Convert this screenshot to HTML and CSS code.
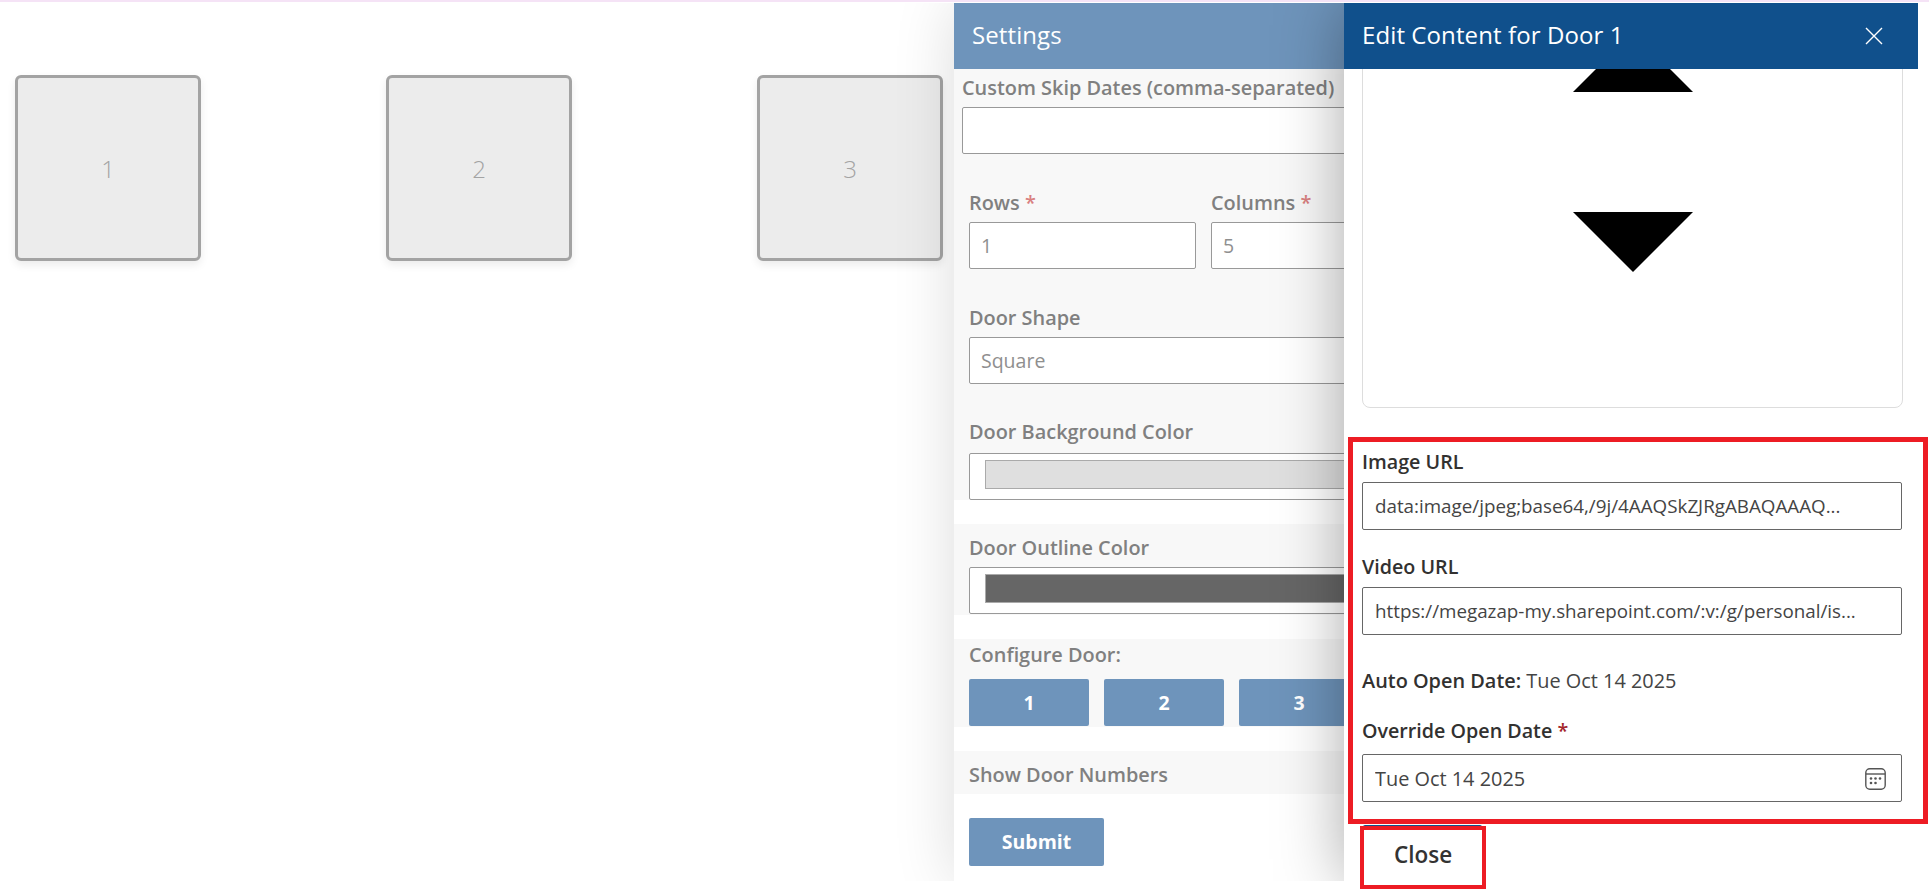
FILE: index.html
```html
<!DOCTYPE html>
<html lang="en">
  <head>
    <meta charset="UTF-8" />
    <meta name="viewport" content="width=device-width, initial-scale=1.0" />
    <title>Advent Calendar Settings</title>
    <link rel="stylesheet" href="styles.css">
  </head>
  <body>
    <div class="topline"></div>

    <main class="doors">
      <div class="door">1</div>
      <div class="door">2</div>
      <div class="door">3</div>
    </main>

    <div class="panels">
      <!-- settings panel, sits behind the door editor -->
      <aside class="settings">
        <div class="settings-title">Settings</div>
        <div class="block block-first">
          <label class="s-label s-label-skip">Custom Skip Dates (comma-separated)</label>
          <input class="s-input s-input-skip" type="text" />
          <div class="row-pair">
            <div class="pair-item">
              <label class="s-label">Rows <span class="req">*</span></label>
              <input class="s-input" type="text" value="1" />
            </div>
            <div class="pair-item">
              <label class="s-label">Columns <span class="req">*</span></label>
              <input class="s-input" type="text" value="5" />
            </div>
          </div>
          <label class="s-label">Door Shape</label>
          <input class="s-input s-input-shape" type="text" value="Square" />
          <label class="s-label s-label-color">Door Background Color</label>
          <div class="color-box"><div class="swatch swatch-bg"></div></div>
        </div>
        <div class="block block-outline">
          <label class="s-label">Door Outline Color</label>
          <div class="color-box"><div class="swatch swatch-outline"></div></div>
        </div>
        <div class="block block-configure">
          <label class="s-label">Configure Door:</label>
          <div class="door-buttons">
            <button class="door-btn">1</button>
            <button class="door-btn">2</button>
            <button class="door-btn">3</button>
          </div>
        </div>
        <div class="block block-numbers">
          <label class="s-label">Show Door Numbers</label>
        </div>
        <button class="submit-btn">Submit</button>
      </aside>

      <!-- door editor -->
      <aside class="editor">
        <div class="editor-title">
          <span>Edit Content for Door 1</span>
          <svg class="close-icon" viewBox="0 0 18 18" width="18" height="18">
            <path d="M1 1 L17 17 M17 1 L1 17" stroke="#fff" stroke-width="1.4" fill="none" />
          </svg>
        </div>
        <div class="editor-body">
          <div class="preview">
            <div class="arrow-up"></div>
            <div class="arrow-down"></div>
          </div>
          <label class="e-label e-label-image">Image URL</label>
          <input class="e-input e-input-url" type="text" value="data:image/jpeg;base64,/9j/4AAQSkZJRgABAQAAAQ..." />
          <label class="e-label e-label-video">Video URL</label>
          <input class="e-input e-input-url" type="text" value="https://megazap-my.sharepoint.com/:v:/g/personal/is..." />
          <p class="auto-date"><strong>Auto Open Date:</strong> Tue Oct 14 2025</p>
          <label class="e-label e-label-override">Override Open Date <span class="req-strong">*</span></label>
          <div class="date-field">
            <input class="e-input" type="text" value="Tue Oct 14 2025" />
            <svg class="calendar-icon" viewBox="0 0 21 22" width="21" height="22">
              <rect x="0.8" y="0.8" width="19.4" height="20.4" rx="4" fill="none" stroke="#555" stroke-width="1.4" />
              <path d="M1 6 H20" stroke="#555" stroke-width="1.4" />
              <g fill="#555">
                <circle cx="6" cy="10.5" r="1.3" />
                <circle cx="10.5" cy="10.5" r="1.3" />
                <circle cx="15" cy="10.5" r="1.3" />
                <circle cx="6" cy="15" r="1.3" />
                <circle cx="10.5" cy="15" r="1.3" />
              </g>
            </svg>
          </div>
          <button class="save-btn" aria-label="Close"></button>
        </div>
      </aside>
    </div>

    <!-- red review marks drawn over the screenshot -->
    <div class="mark mark-fields"></div>
    <div class="mark mark-close">Close</div>
  </body>
</html>
```

FILE: styles.css
```css
* {
  margin: 0;
  padding: 0;
  box-sizing: border-box;
}

html,
body {
  height: 891px;
  overflow: hidden;
}

body {
  background-color: #fff;
  font-family: "Open Sans", "Noto Sans", sans-serif;
  position: relative;
}

.topline {
  height: 2px;
  background-color: #f5e3f6;
}

/* doors */
.doors {
  display: flex;
  gap: 185px;
  padding: 73px 0 0 15px;
}

.door {
  width: 186px;
  height: 186px;
  display: flex;
  align-items: center;
  justify-content: center;
  background-color: #ececec;
  border: 3px solid #a3a3a3;
  border-radius: 6px;
  box-shadow: 0 4px 8px rgba(0, 0, 0, 0.08);
  color: #a3a3a3;
  font-size: 24px;
  font-weight: 300;
}

/* panels */
.panels {
  position: absolute;
  top: 3px;
  left: 0;
  width: 1918px;
  height: 878px;
  overflow: hidden;
}

.settings,
.editor {
  position: absolute;
  top: 0;
  bottom: 0;
}

.settings {
  left: 954px;
  right: 0;
  background-color: #fff;
  box-shadow: 0 0 58px rgba(0, 0, 0, 0.14);
  overflow: hidden;
}

.settings-title {
  height: 66px;
  display: flex;
  align-items: center;
  padding: 0 0 4px 18px;
  background-color: #6e94bb;
  color: #fff;
  font-size: 24px;
  letter-spacing: 0.1px;
}

.block {
  background-color: #f8f8f8;
  padding-left: 15px;
}

.block-first {
  padding-top: 7px;
  height: 431px;
}

.block-outline {
  margin-top: 24px;
  padding-top: 12px;
  height: 91px;
}

.block-configure {
  margin-top: 24px;
  padding-top: 4px;
  height: 88px;
}

.block-numbers {
  margin-top: 24px;
  padding-top: 12px;
  height: 43px;
}

.s-label {
  display: block;
  height: 24px;
  line-height: 23px;
  color: #808080;
  font-size: 19.9px;
  font-weight: 600;
  white-space: nowrap;
}

.s-label-skip {
  margin-left: -7px;
}

.s-label-color {
  margin-top: 36px;
}

.req {
  color: #d98080;
}

.s-input {
  display: block;
  width: 900px;
  height: 47px;
  margin-top: 7px;
  padding: 0 11px;
  border: 1px solid #999;
  border-radius: 2px;
  background-color: #fff;
  color: #8f8f8f;
  font-family: inherit;
  font-size: 19.5px;
}

.s-input-skip {
  margin-left: -7px;
}

.row-pair {
  display: flex;
  gap: 15px;
  margin-top: 37px;
  margin-bottom: 37px;
}

.pair-item {
  width: 227px;
}

.pair-item .s-input {
  width: 227px;
}

.pair-item:last-child,
.pair-item:last-child .s-input {
  width: 300px;
}

.color-box {
  width: 900px;
  height: 47px;
  margin-top: 9px;
  padding: 6px 15px;
  border: 1px solid #999;
  border-radius: 2px;
  background-color: #fff;
}

.block-outline .color-box {
  margin-top: 7px;
}

.swatch {
  height: 29px;
  border: 1px solid #aaa;
}

.swatch-bg {
  background-color: #dfdfdf;
}

.swatch-outline {
  background-color: #666;
}

.door-buttons {
  display: flex;
  gap: 15px;
  margin-top: 12px;
}

.door-btn,
.submit-btn {
  border: none;
  border-radius: 2px;
  background-color: #6e94bb;
  color: #fff;
  font-family: inherit;
  font-size: 19.5px;
  font-weight: 700;
}

.door-btn {
  width: 120px;
  height: 47px;
  flex-shrink: 0;
}

.submit-btn {
  display: block;
  width: 135px;
  height: 48px;
  margin: 24px 0 0 15px;
  padding-bottom: 2px;
}

/* editor */
.editor {
  left: 1344px;
  right: 0;
  display: flex;
  flex-direction: column;
  background-color: #fff;
  box-shadow: 0 0 62px rgba(0, 0, 0, 0.34);
}

.editor-title {
  height: 66px;
  flex-shrink: 0;
  display: flex;
  align-items: center;
  justify-content: space-between;
  padding: 0 35px 0 18px;
  background-color: #10508c;
  color: #fff;
  font-size: 24px;
  letter-spacing: 0.1px;
}

.editor-title span {
  padding-bottom: 4px;
}

.close-icon {
  display: block;
}

.editor-body {
  flex: 1;
  min-height: 0;
  display: flex;
  flex-direction: column;
  justify-content: flex-end;
  overflow: hidden;
  padding: 0 16px 8px 18px;
}

.editor-body > * {
  flex-shrink: 0;
}

.preview {
  width: 541px;
  padding: 40px 0 135px;
  display: flex;
  flex-direction: column;
  align-items: center;
  gap: 120px;
  border: 1px solid #ddd;
  border-radius: 8px;
}

.arrow-up,
.arrow-down {
  width: 0;
  height: 0;
  border-left: 60px solid transparent;
  border-right: 60px solid transparent;
}

.arrow-up {
  border-bottom: 60px solid #000;
}

.arrow-down {
  border-top: 60px solid #000;
}

.e-label {
  display: block;
  height: 24px;
  line-height: 22px;
  color: #323130;
  font-size: 19.7px;
  font-weight: 600;
}

.e-label-image {
  margin-top: 43px;
}

.e-label-video {
  margin-top: 26px;
}

.e-input {
  display: block;
  width: 540px;
  height: 48px;
  margin-top: 7px;
  padding: 0 12px;
  border: 1px solid #666;
  border-radius: 2px;
  color: #444;
  font-family: inherit;
  font-size: 19.9px;
  text-overflow: ellipsis;
}

.e-input-url {
  font-size: 18.8px;
}

.auto-date {
  height: 24px;
  line-height: 24px;
  margin-top: 34px;
  color: #444;
  font-size: 19.9px;
}

.auto-date strong {
  color: #323130;
  font-weight: 600;
}

.e-label-override {
  margin-top: 27px;
}

.req-strong {
  color: #a4262c;
}

.date-field {
  position: relative;
  margin-top: 3px;
}

.calendar-icon {
  position: absolute;
  top: 21px;
  right: 16px;
}

.save-btn {
  width: 119px;
  height: 48px;
  margin: 23px 0 0 1px;
  border: none;
  border-radius: 2px;
  background-color: #10508c;
}

/* review marks */
.mark {
  position: absolute;
  border-style: solid;
  border-color: #ed1c24;
}

.mark-fields {
  top: 437px;
  left: 1348px;
  width: 580px;
  height: 387px;
  border-width: 5px;
}

.mark-close {
  top: 826px;
  left: 1360px;
  width: 126px;
  height: 63px;
  display: flex;
  align-items: center;
  justify-content: center;
  padding-bottom: 6px;
  border-width: 4px;
  background-color: #fff;
  color: #333;
  font-size: 22.5px;
  font-weight: 600;
}
```
